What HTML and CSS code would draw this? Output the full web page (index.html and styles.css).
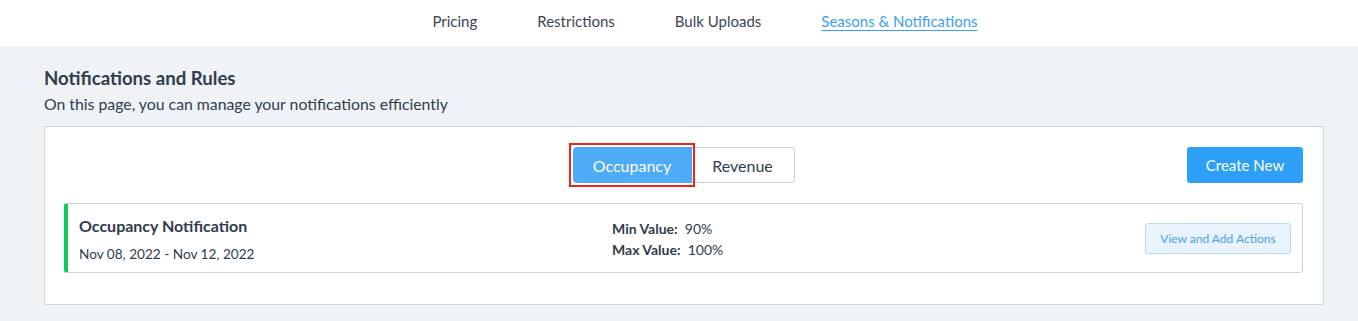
FILE: index.html
```html
<!DOCTYPE html>
<html lang="en">
<head>
  <meta charset="utf-8" />
  <title>Seasons &amp; Notifications</title>
  <link rel="stylesheet" href="styles.css">
</head>
<body>

  <!-- Top tabs -->
  <nav class="topnav">
    <a href="#">Pricing</a>
    <a href="#">Restrictions</a>
    <a href="#">Bulk Uploads</a>
    <a href="#" class="active">Seasons &amp; Notifications</a>
  </nav>

  <main class="page">
    <h2 class="page-title">Notifications and Rules</h2>
    <p class="page-sub">On this page, you can manage your notifications efficiently</p>

    <div class="card">
      <div class="card-head">
        <div></div>
        <div class="switch">
          <button class="switch-btn on">Occupancy</button>
          <button class="switch-btn">Revenue</button>
        </div>
        <button class="btn-primary">Create New</button>
      </div>

      <div class="rule">
        <div class="rule-info">
          <div class="rule-name">Occupancy Notification</div>
          <div class="rule-date">Nov 08, 2022 - Nov 12, 2022</div>
        </div>
        <div class="rule-values">
          <div><b>Min Value:</b>&nbsp; 90%</div>
          <div><b>Max Value:</b>&nbsp; 100%</div>
        </div>
        <button class="btn-light">View and Add Actions</button>
      </div>
    </div>
  </main>

</body>
</html>
```

FILE: styles.css
```css
body {
    font-family: Lato, "Liberation Sans", sans-serif;
    background-color: #eff3f6;
    color: #2f3d4c;
    margin: 0;
}
.topnav {
    background: #fff;
    height: 47px;
    display: flex;
    justify-content: center;
    align-items: center;
    gap: 60px;
    padding-left: 52px;
    padding-bottom: 6px;
    box-sizing: border-box;
    font-size: 15px;
}
.topnav a { color: #3b4654; text-decoration: none; }
.topnav a.active { color: #3aa0f3; text-decoration: underline; text-underline-offset: 3px; }

.page { padding: 19px 34px 16px 44px; }
.page-title { font-size: 18.6px; font-weight: 700; margin: 0; line-height: 24px; }
.page-sub { font-size: 15.8px; margin: 3px 0 0; line-height: 21px; }

.card {
    background: #fff;
    border: 1px solid #d2d6da;
    margin-top: 12px;
    padding: 20px 20px 31px 19px;
}
.card-head {
    display: grid;
    grid-template-columns: 1fr auto 1fr;
    align-items: center;
}
.switch { display: flex; }
.switch-btn {
    font-family: inherit;
    font-size: 16px;
    height: 36px;
    background: #fff;
    color: #2f3d4c;
    border: 1px solid #cfd3d7;
    border-left: none;
    border-radius: 0 4px 4px 0;
    width: 103px;
    cursor: pointer;
}
.switch-btn.on {
    position: relative;
    background: #4eabf8;
    color: #fff;
    border: none;
    border-radius: 4px 0 0 4px;
    width: 119px;
}
/* highlight box round the selected tab */
.switch-btn.on::after {
    content: "";
    position: absolute;
    top: -4px; left: -4px; right: -3px; bottom: -4px;
    border: 2.5px solid #f0241c;
}
.btn-primary {
    justify-self: end;
    font-family: inherit;
    font-size: 15px;
    width: 116px;
    height: 36px;
    background: #2e9ff6;
    color: #fff;
    border: none;
    border-radius: 3px;
    cursor: pointer;
}
.rule {
    margin-top: 20px;
    display: flex;
    align-items: center;
    border: 1px solid #cfd3d7;
    border-left: 4px solid #12cb55;
    border-radius: 3px;
    padding: 12px 11px 8px 11px;
}
.rule-info { width: 533px; }
.rule-name { font-size: 16px; font-weight: 700; line-height: 20px; }
.rule-date { font-size: 13.6px; line-height: 20px; margin-top: 8px; }
.rule-values { flex: 1; font-size: 14px; line-height: 21px; margin-top: -2px; }
.rule-values b { font-weight: 700; }
.btn-light {
    font-family: inherit;
    font-size: 12px;
    width: 146px;
    height: 31px;
    background: #e8f3fe;
    color: #4a9fe8;
    border: 1px solid #b7dafa;
    border-radius: 3px;
    margin-top: -4px;
    cursor: pointer;
}
```
